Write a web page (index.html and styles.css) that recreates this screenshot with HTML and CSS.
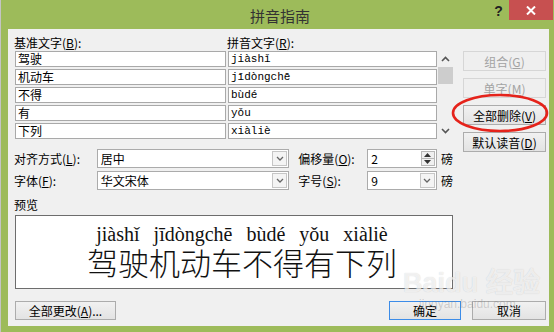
FILE: index.html
```html
<!DOCTYPE html>
<html lang="zh-CN">
  <head>
    <meta charset="UTF-8" />
    <title>拼音指南</title>
    <link rel="stylesheet" href="styles.css">
  </head>
  <body>
    <div class="window">
      <div class="titlebar">
        <span class="title">拼音指南</span>
        <span class="help">?</span>
        <span class="close">
          <svg width="10" height="9" viewBox="0 0 10 9"><path d="M1 0.5 L9 8.5 M9 0.5 L1 8.5" stroke="#fff" stroke-width="2" fill="none"/></svg>
        </span>
      </div>

      <div class="client">
        <div class="left">
          <div class="labels">
            <span class="lbl-base">基准文字(<u>B</u>):</span>
            <span>拼音文字(<u>R</u>):</span>
          </div>

          <div class="list">
            <div class="cells">
              <div class="cell">驾驶</div><div class="cell py">jiàshǐ</div>
              <div class="cell">机动车</div><div class="cell py">jīdòngchē</div>
              <div class="cell">不得</div><div class="cell py">bùdé</div>
              <div class="cell">有</div><div class="cell py">yǒu</div>
              <div class="cell">下列</div><div class="cell py">xiàliè</div>
            </div>
            <div class="scrollbar">
              <div class="sb-btn">
                <svg width="9" height="6" viewBox="0 0 9 6"><path d="M1 5 L4.5 1.5 L8 5" stroke="#555" stroke-width="1.6" fill="none"/></svg>
              </div>
              <div class="sb-thumb"></div>
              <div class="sb-space"></div>
              <div class="sb-btn">
                <svg width="9" height="6" viewBox="0 0 9 6"><path d="M1 1 L4.5 4.5 L8 1" stroke="#555" stroke-width="1.6" fill="none"/></svg>
              </div>
            </div>
          </div>

          <div class="opt-row first">
            <span class="opt-label">对齐方式(<u>L</u>):</span>
            <div class="select wide">
              <span class="select-text">居中</span>
              <span class="dd">
                <svg width="8" height="5" viewBox="0 0 8 5"><path d="M1 1 L4 4 L7 1" stroke="#666" stroke-width="1.3" fill="none"/></svg>
              </span>
            </div>
            <span class="opt-label2">偏移量(<u>O</u>):</span>
            <div class="select narrow">
              <span class="select-text">2</span>
              <span class="spin">
                <svg width="7" height="4" viewBox="0 0 7 4"><polygon points="0,4 3.5,0 7,4" fill="#333"/></svg>
                <i class="spin-line"></i>
                <svg width="7" height="4" viewBox="0 0 7 4"><polygon points="0,0 7,0 3.5,4" fill="#333"/></svg>
              </span>
            </div>
            <span class="unit">磅</span>
          </div>

          <div class="opt-row">
            <span class="opt-label">字体(<u>F</u>):</span>
            <div class="select wide">
              <span class="select-text">华文宋体</span>
              <span class="dd">
                <svg width="8" height="5" viewBox="0 0 8 5"><path d="M1 1 L4 4 L7 1" stroke="#666" stroke-width="1.3" fill="none"/></svg>
              </span>
            </div>
            <span class="opt-label2">字号(<u>S</u>):</span>
            <div class="select narrow">
              <span class="select-text">9</span>
              <span class="dd">
                <svg width="8" height="5" viewBox="0 0 8 5"><path d="M1 1 L4 4 L7 1" stroke="#666" stroke-width="1.3" fill="none"/></svg>
              </span>
            </div>
            <span class="unit">磅</span>
          </div>

          <div class="preview-label">预览</div>
          <div class="preview">
            <div class="preview-py">jiàshǐ jīdòngchē bùdé yǒu xiàliè</div>
            <div class="preview-zh">驾驶机动车不得有下列</div>
          </div>
        </div>

        <div class="side">
          <button class="btn disabled">组合(<u>G</u>)</button>
          <button class="btn disabled">单字(<u>M</u>)</button>
          <button class="btn">全部删除(<u>V</u>)</button>
          <button class="btn">默认读音(<u>D</u>)</button>
        </div>

        <div class="footer">
          <button class="btn change-all">全部更改(<u>A</u>)...</button>
          <button class="btn ok">确定</button>
          <button class="btn cancel">取消</button>
        </div>
      </div>

      <!-- 红色圈注 -->
      <svg class="circle-mark" width="104" height="44" viewBox="0 0 104 44">
        <ellipse cx="51" cy="22" rx="47" ry="18" stroke="#e5231b" stroke-width="2.6" fill="none"/>
      </svg>

      <!-- 水印 -->
      <div class="watermark">
        <span class="wm-logo">Bai<span class="wm-paw">du</span> 经验</span>
        <span class="wm-url">jingyan.baidu.com</span>
      </div>
    </div>
  </body>
</html>
```

FILE: styles.css
```css
body {
  margin: 0;
  padding: 0;
  width: 554px;
  height: 332px;
  overflow: hidden;
  font-family: "Noto Sans CJK SC", "Noto Sans", sans-serif;
  font-size: 12px;
  color: #000;
}

.window {
  position: relative;
  width: 554px;
  height: 332px;
  box-sizing: border-box;
  background-color: #9dbb5a;
  border-left: 1px solid #c4c4c4;
  display: flex;
  flex-direction: column;
}

.titlebar {
  height: 29px;
  display: flex;
  align-items: flex-start;
}
.title {
  flex: 1;
  padding-left: 71px;
  text-align: center;
  font-size: 15px;
  line-height: 31px;
  color: #333;
}
.help {
  width: 21px;
  line-height: 22px;
  text-align: center;
  font-family: "Liberation Sans", sans-serif;
  font-weight: bold;
  font-size: 14px;
  color: #222;
}
.close {
  width: 44px;
  height: 20px;
  margin-right: 1px;
  background-color: #c75050;
  display: flex;
  align-items: center;
  justify-content: center;
}

.client {
  margin-left: 7px;
  width: 541px;
  height: 297px;
  box-sizing: border-box;
  padding: 7px 3px 0 6px;
  background-color: #f0f0f0;
  display: grid;
  grid-template-columns: 439px 83px;
  column-gap: 10px;
  align-content: start;
}

/* 列表 */
.labels {
  display: flex;
  height: 14px;
  line-height: 14px;
}
.lbl-base {
  width: 213px;
}
.list {
  display: flex;
  margin: 1px 0 0 1px;
  height: 88px;
}
.cells {
  display: grid;
  grid-template-columns: 211px 209px;
  grid-auto-rows: 16px;
  gap: 2px;
}
.cell {
  box-sizing: border-box;
  border: 1px solid #a9a9a9;
  background-color: #fff;
  padding-left: 2px;
  line-height: 14px;
  white-space: nowrap;
  overflow: hidden;
}
.cell.py {
  font-family: "Liberation Mono", monospace;
  font-size: 11px;
}
.scrollbar {
  width: 15px;
  margin-left: 1px;
  display: flex;
  flex-direction: column;
}
.sb-btn {
  height: 16px;
  display: flex;
  align-items: center;
  justify-content: center;
}
.sb-thumb {
  height: 17px;
  background-color: #cdcdcd;
}
.sb-space {
  flex: 1;
}

/* 选项 */
.opt-row {
  display: flex;
  align-items: center;
  height: 19px;
  margin-top: 3px;
}
.opt-row.first {
  margin-top: 10px;
}
.opt-label {
  width: 83px;
}
.opt-label2 {
  width: 69px;
  margin-left: 9px;
}
.select {
  box-sizing: border-box;
  height: 19px;
  border: 1px solid #ababab;
  background-color: #fff;
  display: flex;
  align-items: stretch;
}
.select.wide {
  width: 193px;
}
.select.narrow {
  width: 70px;
}
.select-text {
  flex: 1;
  padding-left: 3px;
  line-height: 17px;
}
.dd {
  width: 15px;
  margin: 1px;
  box-sizing: border-box;
  border: 1px solid #c6c6c6;
  background-color: #f4f4f4;
  display: flex;
  align-items: center;
  justify-content: center;
}
.spin {
  width: 14px;
  margin: 1px;
  box-sizing: border-box;
  border: 1px solid #b8b8b8;
  background-color: #f0f0f0;
  display: flex;
  flex-direction: column;
  align-items: center;
  justify-content: center;
  gap: 1px;
}
.spin-line {
  width: 100%;
  height: 1px;
  background-color: #b8b8b8;
}
.unit {
  margin-left: 4px;
}

/* 预览 */
.preview-label {
  margin-top: 8px;
  line-height: 14px;
}
.preview {
  margin: 3px 0 0 1px;
  width: 438px;
  height: 74px;
  box-sizing: border-box;
  border: 1px solid #6d6d6d;
  background-color: #fff;
  padding: 7px 0 0 16px;
  text-align: center;
}
.preview-py {
  font-family: "Liberation Serif", serif;
  font-size: 20px;
  line-height: 22px;
  word-spacing: 9px;
  color: #111;
}
.preview-zh {
  font-size: 31px;
  font-weight: 300;
  line-height: 34px;
  color: #111;
}

/* 按钮 */
.side {
  margin-top: 15px;
  display: flex;
  flex-direction: column;
  gap: 7px;
}
.btn {
  box-sizing: border-box;
  height: 20px;
  padding: 0;
  border: 1px solid #acacac;
  background: linear-gradient(#f1f1f1, #e3e3e3);
  font-family: "Noto Sans CJK SC", sans-serif;
  font-size: 12px;
  line-height: 17px;
  color: #000;
}
.btn.disabled {
  border-color: #d6d6d6;
  background: #efefef;
  color: #a3a3a3;
}

.footer {
  grid-column: 1 / -1;
  margin-top: 12px;
  display: flex;
  gap: 11px;
}
.footer .btn {
  height: 19px;
}
.change-all {
  margin-left: 1px;
  width: 101px;
}
.ok {
  margin-left: auto;
  width: 72px;
  border-color: #3c8ce8;
}
.cancel {
  width: 74px;
}

/* 圈注 */
.circle-mark {
  position: absolute;
  left: 448px;
  top: 91px;
}

/* 水印 */
.watermark {
  position: absolute;
  left: 402px;
  top: 268px;
  display: flex;
  flex-direction: column;
  pointer-events: none;
}
.wm-logo {
  font-family: "Liberation Sans", sans-serif;
  font-size: 27px;
  font-weight: bold;
  line-height: 30px;
  color: rgba(255, 255, 255, 0.7);
  text-shadow: 0 0 1px rgba(0, 0, 0, 0.18);
}
.wm-url {
  margin-left: 16px;
  font-family: "Liberation Sans", sans-serif;
  font-size: 12px;
  line-height: 12px;
  color: rgba(120, 120, 120, 0.3);
}
```
